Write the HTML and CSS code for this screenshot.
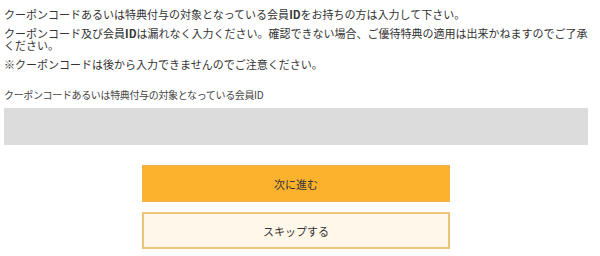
FILE: index.html
```html
<!DOCTYPE html>
<html lang="ja">
<head>
    <meta charset="UTF-8">
    <meta name="viewport" content="width=device-width, initial-scale=1.0">
    <title>クーポンコード入力</title>
    <link rel="stylesheet" href="styles.css">
</head>
<body>
    <div class="container">
        <div class="notes">
            <p>クーポンコードあるいは特典付与の対象となっている会員<b>ID</b>をお持ちの方は入力して下さい。</p>
            <p>クーポンコード及び会員<b>ID</b>は漏れなく入力ください。確認できない場合、ご優待特典の適用は出来かねますのでご了承ください。</p>
            <p>※クーポンコードは後から入力できませんのでご注意ください。</p>
        </div>
        <label class="label" for="coupon">クーポンコードあるいは特典付与の対象となっている会員ID</label>
        <input class="field" id="coupon" type="text">
        <div class="actions">
            <button class="btn next">次に進む</button>
            <button class="btn skip">スキップする</button>
        </div>
    </div>
</body>
</html>
```

FILE: styles.css
```css
body {
    margin: 0;
    font-family: "Noto Sans CJK JP", "Noto Sans", sans-serif;
    color: #333;
    background: #fff;
}
.container {
    width: 584px;
    margin-left: 4px;
    padding-top: 8px;
}
.notes p {
    margin: 0 0 7px;
    font-size: 11px;
    line-height: 12px;
}
.notes b {
    font-weight: bold;
}
.label {
    display: block;
    margin-top: 18px;
    font-size: 10px;
    letter-spacing: -0.35px;
    line-height: 13px;
    color: #444;
}
.field {
    display: block;
    box-sizing: border-box;
    width: 584px;
    height: 37px;
    margin-top: 7px;
    border: none;
    background: #dcdcdc;
}
.actions {
    display: flex;
    flex-direction: column;
    align-items: center;
    gap: 10px;
    margin-top: 20px;
}
.btn {
    box-sizing: border-box;
    width: 308px;
    height: 37px;
    font-family: inherit;
    font-size: 11px;
    color: #333;
    cursor: pointer;
}
.next {
    background: #fdb22d;
    border: 1px solid #f4b04a;
}
.skip {
    background: #fff8ea;
    border: 2px solid #ebc67a;
}
```
